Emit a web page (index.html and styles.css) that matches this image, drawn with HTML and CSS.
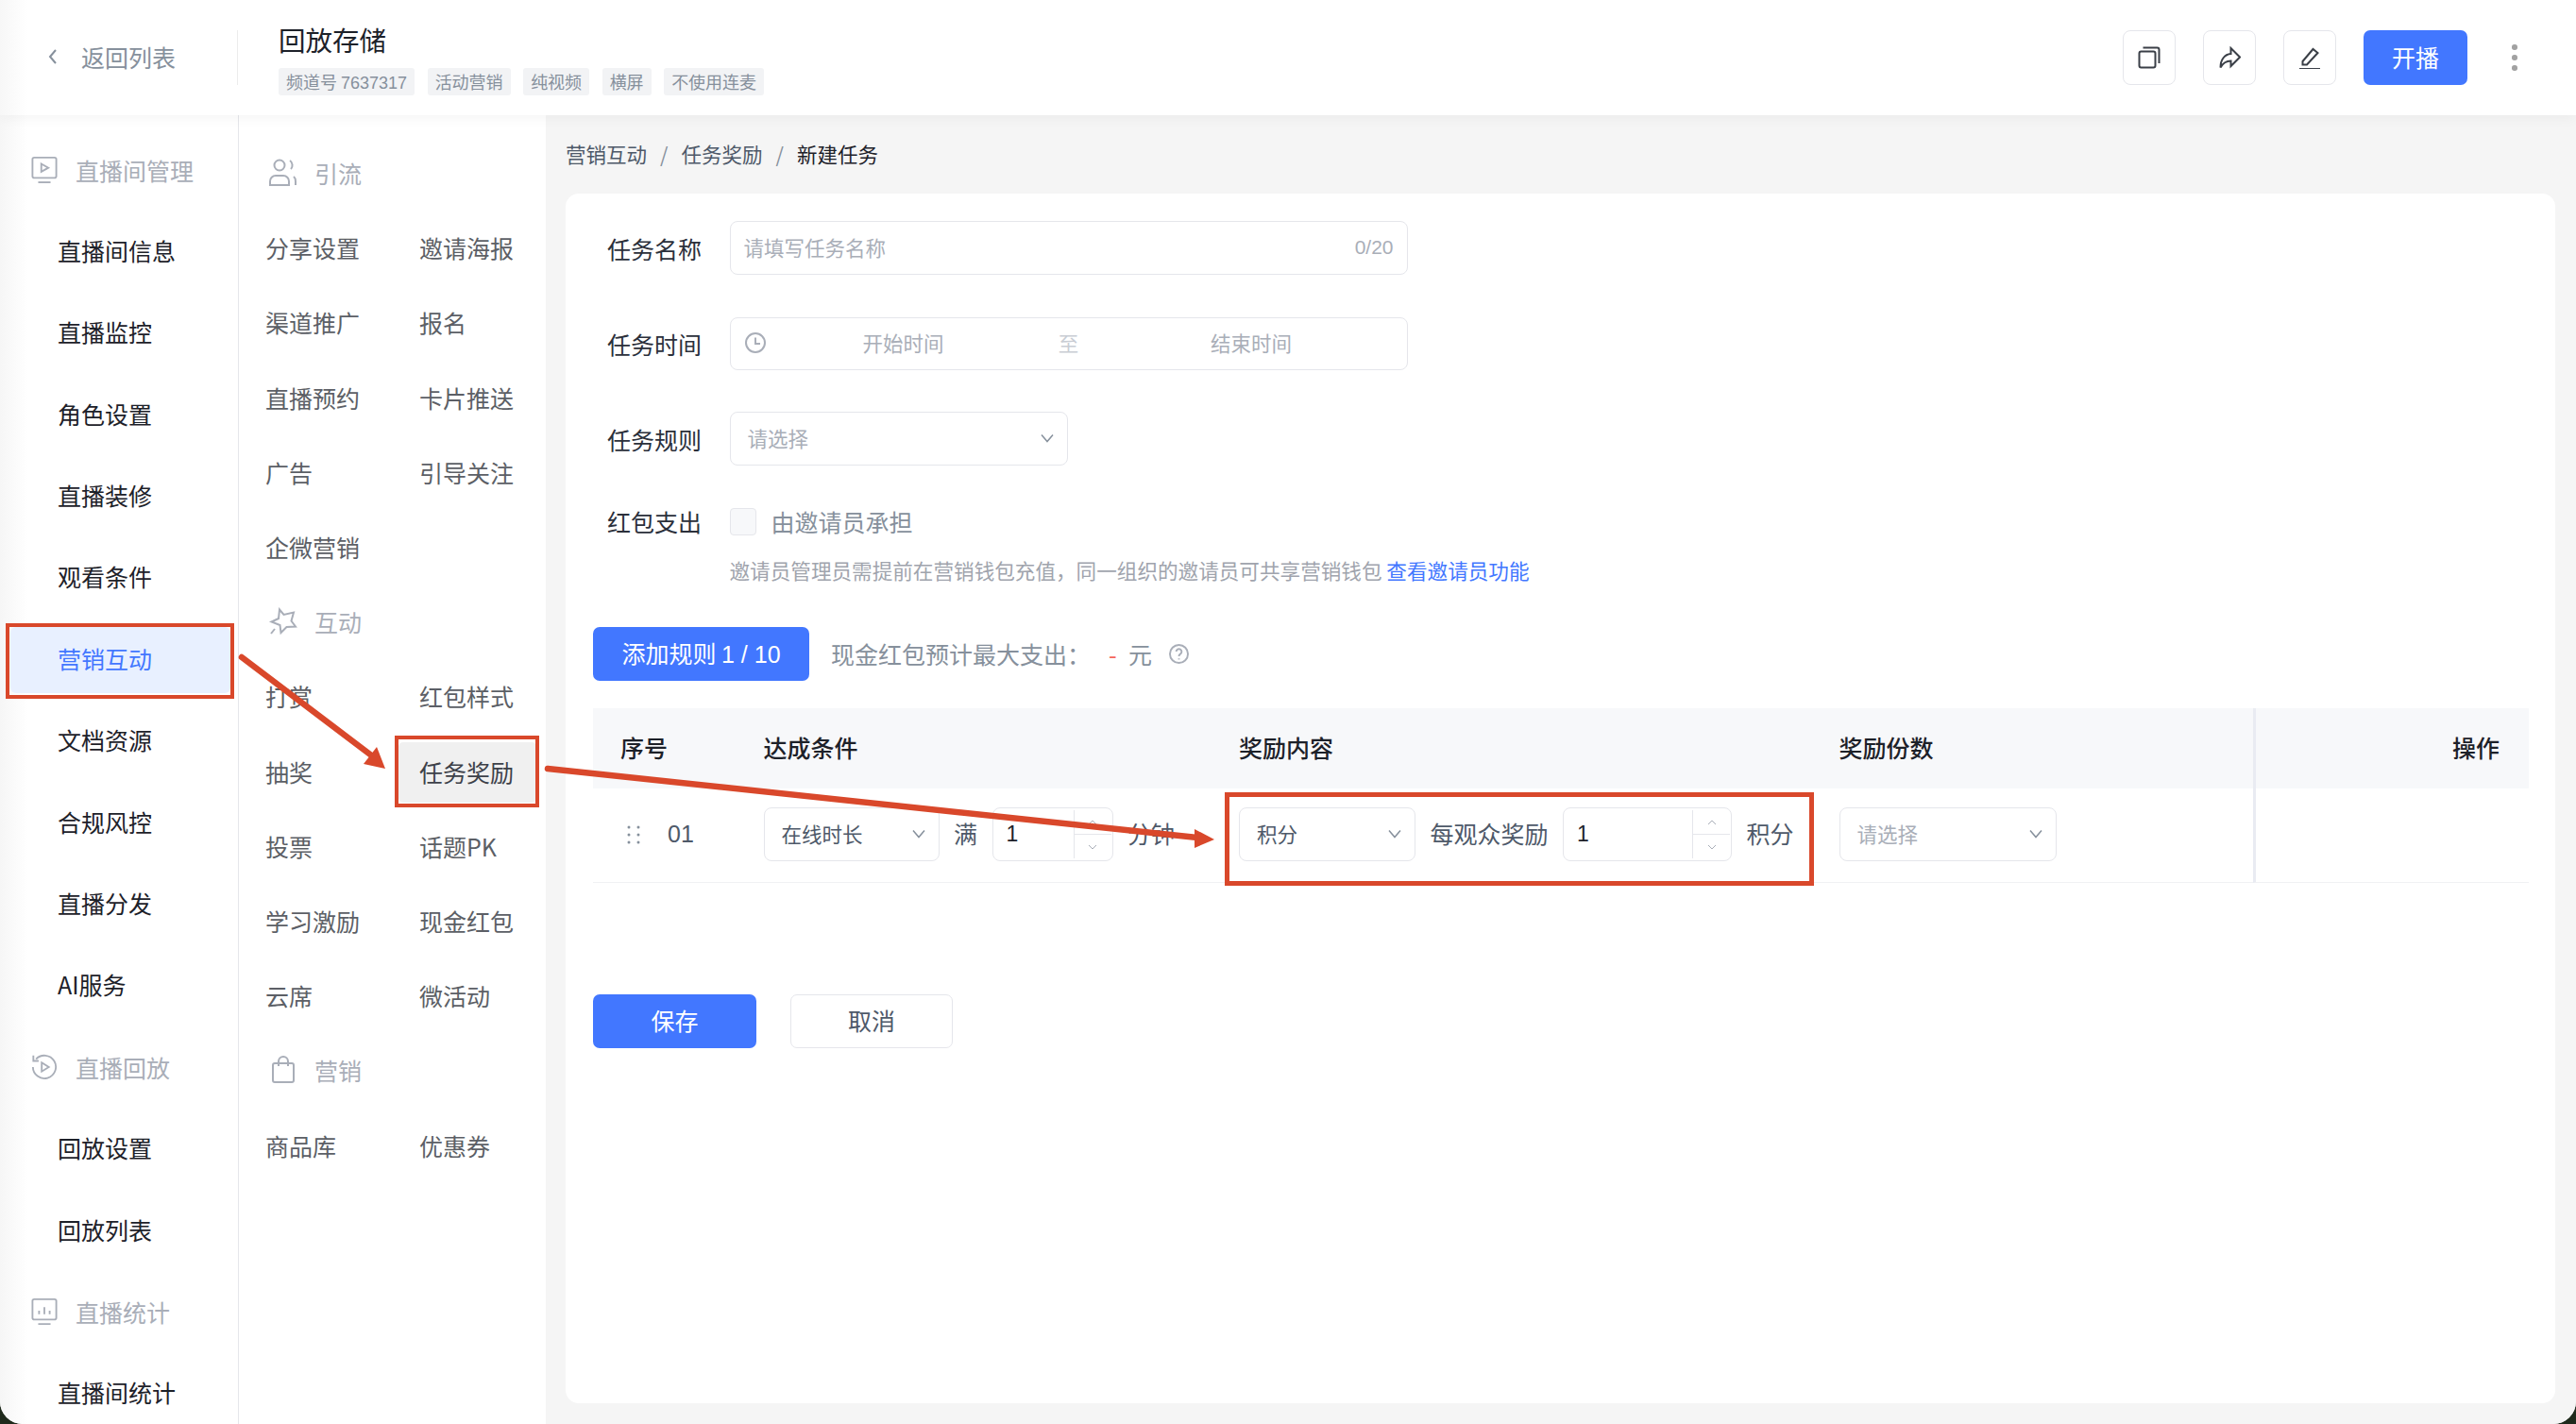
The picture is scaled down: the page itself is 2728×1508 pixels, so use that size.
FILE: index.html
```html
<!DOCTYPE html>
<html lang="zh-CN">
<head>
  <meta charset="UTF-8" />
  <title>回放存储 - 新建任务</title>
  <link rel="stylesheet" href="styles.css">
</head>
<body>
  <div class="app">
    <header class="topbar">
      <a class="back">
        <svg class="back-icon" viewBox="0 0 12 20"><path d="M9 3 3 10l6 7" /></svg>
        <span>返回列表</span>
      </a>
      <div class="channel">
        <h1>回放存储</h1>
        <div class="tags">
          <span class="tag">频道号 <span class="latin">7637317</span></span>
          <span class="tag">活动营销</span>
          <span class="tag">纯视频</span>
          <span class="tag">横屏</span>
          <span class="tag">不使用连麦</span>
        </div>
      </div>
      <div class="actions">
        <button class="icon-btn">
          <svg viewBox="0 0 24 24"><rect x="1.500" y="5.500" width="17" height="17" rx="2" /><path d="M5.500 1.500h15a2 2 0 0 1 2 2V18" /></svg>
        </button>
        <button class="icon-btn">
          <svg viewBox="0 0 24 24"><path d="M13.500 2 23 11.500 13.500 21v-5.500c-5 0-8 1.500-11 7C2.500 14 7 8.500 13.500 8z" /></svg>
        </button>
        <button class="icon-btn">
          <svg viewBox="0 0 24 24"><path d="m4.500 16 11-13 5 4L9 19.500H4.500z" /><path d="M1 24h22" /></svg>
        </button>
        <button class="btn-primary start-btn">开播</button>
        <div class="more"><i></i><i></i><i></i></div>
      </div>
    </header>

    <div class="content">
      <nav class="menu-main">
        <div class="menu-title">
          <svg viewBox="0 0 30 30"><rect x="1.500" y="1" width="27" height="23" rx="2" /><path d="m11.500 8 8 4.500-8 4.500z" /><path d="M8 29h14" /></svg>
          <span>直播间管理</span>
        </div>
        <a class="menu-item">直播间信息</a>
        <a class="menu-item">直播监控</a>
        <a class="menu-item">角色设置</a>
        <a class="menu-item">直播装修</a>
        <a class="menu-item">观看条件</a>
        <a class="menu-item active">营销互动</a>
        <a class="menu-item">文档资源</a>
        <a class="menu-item">合规风控</a>
        <a class="menu-item">直播分发</a>
        <a class="menu-item">AI服务</a>
        <div class="menu-title">
          <svg viewBox="0 0 30 30"><path d="M5.500 6A13 13 0 1 1 2 15" /><path d="M2.500 2v6h6" /><path d="m12 10 8 5-8 5z" /></svg>
          <span>直播回放</span>
        </div>
        <a class="menu-item">回放设置</a>
        <a class="menu-item">回放列表</a>
        <div class="menu-title">
          <svg viewBox="0 0 30 30"><rect x="1.500" y="1" width="27" height="23" rx="2" /><path d="M9 14v4M15 10v8M21 14v4" /><path d="M8 29h14" /></svg>
          <span>直播统计</span>
        </div>
        <a class="menu-item">直播间统计</a>
      </nav>

      <nav class="menu-sub">
        <div class="sub-title">
          <svg viewBox="0 0 32 30"><circle cx="12" cy="7" r="5.500" /><path d="M2 28v-4a6 6 0 0 1 6-6h8a6 6 0 0 1 6 6v4z" /><path d="M23 2a6 6 0 0 1 1 9" /><path d="M27 19a6 6 0 0 1 2 5v4" /></svg>
          <span>引流</span>
        </div>
        <div class="sub-grid">
          <a class="sub-item">分享设置</a><a class="sub-item">邀请海报</a>
          <a class="sub-item">渠道推广</a><a class="sub-item">报名</a>
          <a class="sub-item">直播预约</a><a class="sub-item">卡片推送</a>
          <a class="sub-item">广告</a><a class="sub-item">引导关注</a>
          <a class="sub-item">企微营销</a>
        </div>
        <div class="sub-title">
          <svg viewBox="0 0 32 30"><path d="M12 2.500 16.500 8 27 5.500l-2.500 9 4.500 6-9.500.5-6 6-1-8L3.500 15.500 11 12z" /><path d="m7 23-4 5" /></svg>
          <span>互动</span>
        </div>
        <div class="sub-grid">
          <a class="sub-item">打赏</a><a class="sub-item">红包样式</a>
          <a class="sub-item">抽奖</a><a class="sub-item current">任务奖励</a>
          <a class="sub-item">投票</a><a class="sub-item">话题PK</a>
          <a class="sub-item">学习激励</a><a class="sub-item">现金红包</a>
          <a class="sub-item">云席</a><a class="sub-item">微活动</a>
        </div>
        <div class="sub-title">
          <svg viewBox="0 0 32 30"><rect x="5" y="8" width="22" height="20" rx="2" /><path d="M11 11V6a5 5 0 0 1 10 0v5" /></svg>
          <span>营销</span>
        </div>
        <div class="sub-grid">
          <a class="sub-item">商品库</a><a class="sub-item">优惠券</a>
        </div>
      </nav>

      <main class="page">
        <div class="crumbs">
          <span>营销互动</span><em>/</em><span>任务奖励</span><em>/</em><span class="crumb-now">新建任务</span>
        </div>

        <section class="card">
          <div class="form-row">
            <label>任务名称</label>
            <div class="field field-wide">
              <span class="placeholder">请填写任务名称</span>
              <span class="placeholder count latin">0/20</span>
            </div>
          </div>
          <div class="form-row">
            <label>任务时间</label>
            <div class="field field-wide field-time">
              <svg class="clock" viewBox="0 0 22 22"><circle cx="11" cy="11" r="10" /><path d="M11 5.500V12h5" /></svg>
              <span class="placeholder time-start">开始时间</span>
              <span class="placeholder time-sep">至</span>
              <span class="placeholder time-end">结束时间</span>
            </div>
          </div>
          <div class="form-row">
            <label>任务规则</label>
            <div class="field select select-rule">
              <span class="placeholder">请选择</span>
              <svg class="chevron" viewBox="0 0 14 10"><path d="m1 1.500 6 7 6-7" /></svg>
            </div>
          </div>
          <div class="form-row form-check">
            <label>红包支出</label>
            <span class="checkbox"></span>
            <span class="check-text">由邀请员承担</span>
          </div>
          <p class="hint">邀请员管理员需提前在营销钱包充值，同一组织的邀请员可共享营销钱包 <a>查看邀请员功能</a></p>

          <div class="toolbar">
            <button class="btn-primary add-btn">添加规则 <span class="latin">1 / 10</span></button>
            <span class="budget">现金红包预计最大支出：</span>
            <span class="budget-val">-</span>
            <span class="budget-unit">元</span>
            <svg class="help" viewBox="0 0 22 22"><circle cx="11" cy="11" r="10" /><path d="M8 8.500a3 3 0 1 1 4.500 2.600c-1 .6-1.500 1.100-1.500 2.400" /><path d="M11 16v1.200" /></svg>
          </div>

          <div class="rules">
            <div class="th th-seq">序号</div>
            <div class="th">达成条件</div>
            <div class="th">奖励内容</div>
            <div class="th">奖励份数</div>
            <div class="th th-op">操作</div>

            <div class="td td-seq">
              <svg class="drag" viewBox="0 0 14 20"><g><circle cx="2" cy="2" r="1.500" /><circle cx="12" cy="2" r="1.500" /><circle cx="2" cy="10" r="1.500" /><circle cx="12" cy="10" r="1.500" /><circle cx="2" cy="18" r="1.500" /><circle cx="12" cy="18" r="1.500" /></g></svg>
              <span class="latin">01</span>
            </div>
            <div class="td">
              <div class="field select select-cond">
                <span class="value">在线时长</span>
                <svg class="chevron" viewBox="0 0 14 10"><path d="m1 1.500 6 7 6-7" /></svg>
              </div>
              <span class="unit">满</span>
              <div class="field number number-min">
                <span class="num latin">1</span>
                <div class="steps">
                  <span><svg viewBox="0 0 10 6"><path d="m1 5 4-4 4 4" /></svg></span>
                  <span><svg viewBox="0 0 10 6"><path d="m1 1 4 4 4-4" /></svg></span>
                </div>
              </div>
              <span class="unit">分钟</span>
            </div>
            <div class="td td-reward">
              <div class="field select select-reward">
                <span class="value">积分</span>
                <svg class="chevron" viewBox="0 0 14 10"><path d="m1 1.500 6 7 6-7" /></svg>
              </div>
              <span class="unit">每观众奖励</span>
              <div class="field number number-reward">
                <span class="num latin">1</span>
                <div class="steps">
                  <span><svg viewBox="0 0 10 6"><path d="m1 5 4-4 4 4" /></svg></span>
                  <span><svg viewBox="0 0 10 6"><path d="m1 1 4 4 4-4" /></svg></span>
                </div>
              </div>
              <span class="unit">积分</span>
            </div>
            <div class="td">
              <div class="field select select-share">
                <span class="placeholder">请选择</span>
                <svg class="chevron" viewBox="0 0 14 10"><path d="m1 1.500 6 7 6-7" /></svg>
              </div>
            </div>
            <div class="td td-op"></div>
          </div>

          <div class="form-btns">
            <button class="btn-primary save-btn">保存</button>
            <button class="cancel-btn">取消</button>
          </div>
        </section>
      </main>
    </div>

    <!-- red annotation arrows drawn over the page -->
    <svg class="arrows" viewBox="0 0 2728 1508">
      <path class="arrow-line" d="M256 696 396 802" />
      <path class="arrow-head" d="M408 814 385 809 399 791z" />
      <path class="arrow-line" d="M580 814 1268 887" />
      <path class="arrow-head" d="M1286 889 1265 878 1265 898z" />
    </svg>
  </div>
</body>
</html>
```

FILE: styles.css
```css
body {
  margin: 0;
  width: 2728px;
  height: 1508px;
  overflow: hidden;
  background: #1f2a1c;
  font-family: "Noto Sans CJK SC", sans-serif;
  font-size: 25px;
  color: #1d2129;
}

svg {
  display: block;
  fill: none;
  stroke: currentColor;
  stroke-width: 2;
}

button {
  font-family: inherit;
  cursor: pointer;
}

/* digits without the foot on the 1 */
.latin {
  font-family: "Liberation Sans", sans-serif;
}

.app {
  position: relative;
  display: flex;
  flex-direction: column;
  height: 1508px;
  overflow: hidden;
  border-radius: 0 0 24px 24px;
  background: #fff;
}

/* Top bar */
.topbar {
  position: relative;
  z-index: 2;
  flex: none;
  display: flex;
  align-items: center;
  height: 122px;
  background: linear-gradient(90deg, #f7f7f7, #fff 30px);
  box-shadow: 0 2px 14px rgba(0, 0, 0, 0.05);
}

.back {
  display: flex;
  align-items: center;
  box-sizing: border-box;
  width: 252px;
  height: 58px;
  padding: 0 0 2px 50px;
  border-right: 1px solid #ececec;
  color: #86909c;
}

.back-icon {
  width: 12px;
  height: 20px;
  margin-right: 24px;
  stroke: #86909c;
}

.channel {
  margin: 4px 0 0 43px;
}

.channel h1 {
  margin: -2px 0 12px;
  font-size: 28.500px;
  font-weight: 400;
  line-height: 36px;
}

.tags {
  display: flex;
  gap: 13.500px;
}

.tag {
  height: 29px;
  padding: 0 8px;
  border-radius: 3px;
  background: #f2f3f5;
  color: #86909c;
  font-size: 18px;
  line-height: 28px;
}

.actions {
  display: flex;
  align-items: center;
  gap: 29px;
  margin-left: auto;
  padding-right: 62.500px;
}

.icon-btn {
  width: 56px;
  height: 58px;
  padding: 0;
  border: 1.500px solid #e5e6eb;
  border-radius: 8px;
  background: #fff;
  color: #3a3f47;
}

.icon-btn svg {
  width: 24px;
  height: 24px;
  margin: auto;
}

.btn-primary {
  border: none;
  border-radius: 7px;
  background: #4277ff;
  color: #fff;
  font-size: 25px;
}

.start-btn {
  width: 110px;
  height: 58px;
  padding: 0 0 2px;
}

.more {
  display: flex;
  flex-direction: column;
  gap: 5.500px;
  margin-left: 18px;
}

.more i {
  width: 5.500px;
  height: 5.500px;
  border-radius: 50%;
  background: #a2a2a2;
}

/* Menus */
.content {
  flex: 1;
  display: flex;
  min-height: 0;
}

.menu-main {
  flex: none;
  display: flex;
  flex-direction: column;
  box-sizing: border-box;
  width: 253px;
  padding-top: 15.500px;
  border-right: 1px solid #e5e6eb;
  background: linear-gradient(90deg, #f6f6f6, #fff 30px);
}

.menu-title {
  flex: none;
  display: flex;
  align-items: center;
  gap: 19px;
  box-sizing: border-box;
  height: 86.400px;
  padding: 0 0 2px 33px;
  color: #a9aeb8;
}

.menu-title svg {
  flex: none;
  width: 28px;
  height: 30px;
}

.menu-item {
  flex: none;
  position: relative;
  display: block;
  height: 70.400px;
  margin: 8px 8px 8px 11px;
  padding-left: 50px;
  border-radius: 6px;
  line-height: 67px;
}

.menu-item.active {
  background: #e8f0ff;
  color: #4277ff;
}

.menu-item.active::after {
  content: "";
  position: absolute;
  inset: -4px -4px -6px -5px;
  border: 4.500px solid #d9482b;
}

.menu-sub {
  flex: none;
  box-sizing: border-box;
  width: 325px;
  padding-top: 22.500px;
}

.sub-title {
  display: flex;
  align-items: center;
  gap: 17px;
  box-sizing: border-box;
  height: 79.200px;
  padding: 0 0 2px 31px;
  color: #a9aeb8;
}

.sub-title svg {
  flex: none;
  width: 32px;
  height: 30px;
}

.sub-grid {
  display: grid;
  grid-template-columns: 163px 146px;
  grid-auto-rows: 64px;
  row-gap: 15.200px;
  padding: 7.600px 0 7.600px 6px;
}

.sub-item {
  position: relative;
  padding-left: 22px;
  border-radius: 5px;
  color: #5c5f66;
  line-height: 62px;
}

.sub-item.current {
  background: #f0f0f0;
  color: #3d4149;
}

.sub-item.current::after {
  content: "";
  position: absolute;
  inset: -7px -3px -5px -4px;
  border: 4px solid #d9482b;
}

/* Main page */
.page {
  flex: 1;
  min-width: 0;
  padding: 0 22px 22px 21px;
  background: #f5f5f5;
}

.crumbs {
  display: flex;
  align-items: center;
  box-sizing: border-box;
  height: 83px;
  padding-bottom: 2px;
  font-size: 21.500px;
  color: #4e5969;
}

.crumbs em {
  margin: 0 14px;
  font-style: normal;
  color: #86909c;
}

.crumb-now {
  color: #1d2129;
}

.card {
  box-sizing: border-box;
  height: 1281px;
  padding: 29px 28px 0 29px;
  border-radius: 14px;
  background: #fff;
}

.form-row {
  display: flex;
  align-items: center;
  margin-bottom: 44.500px;
  padding-left: 15px;
}

.form-row label {
  flex: none;
  width: 129.500px;
  color: #2b303b;
}

.field {
  display: flex;
  align-items: center;
  box-sizing: border-box;
  height: 57px;
  border: 1.500px solid #e5e6eb;
  border-radius: 8px;
  background: #fff;
  font-size: 21.500px;
}

.field-wide {
  justify-content: space-between;
  width: 718px;
  padding: 0 14px 2px;
}

.placeholder {
  color: #a9aeb8;
}

.count {
  font-size: 21px;
}

.field-time {
  justify-content: flex-start;
  height: 56px;
  padding: 0 0 2px 15px;
}

.clock {
  flex: none;
  width: 22px;
  height: 22px;
  color: #a9aeb8;
}

.time-start {
  width: 292px;
  text-align: center;
}

.time-sep {
  width: 58px;
  color: #c9cdd4;
  text-align: center;
}

.time-end {
  flex: 1;
  text-align: center;
}

.select {
  justify-content: space-between;
  padding: 0 14px 2px 18px;
}

.chevron {
  flex: none;
  width: 14px;
  height: 10px;
  color: #86909c;
  stroke-width: 1.500;
}

.select-rule {
  width: 358px;
}

.select-cond {
  width: 186px;
}

.select-reward {
  width: 187px;
}

.select-share {
  width: 230px;
}

.value {
  color: #4e5969;
}

.form-check {
  height: 29px;
  margin-bottom: 0;
}

.checkbox {
  box-sizing: border-box;
  width: 28px;
  height: 29px;
  margin-right: 16px;
  border: 1.500px solid #e5e6eb;
  border-radius: 4px;
  background: #f7f8fa;
}

.check-text {
  color: #86909c;
}

.hint {
  margin: 22px 0 0 144.500px;
  font-size: 21.600px;
  line-height: 30px;
  color: #a0a4ad;
}

.hint a {
  color: #4277ff;
}

.toolbar {
  display: flex;
  align-items: center;
  height: 57px;
  margin-top: 45px;
}

.add-btn {
  width: 229px;
  height: 57px;
  margin-right: 23px;
  padding: 0 0 2px;
}

.budget {
  width: 294px;
  color: #86909c;
}

.budget-val {
  width: 21px;
  color: #f5655a;
}

.budget-unit {
  width: 43px;
  color: #86909c;
}

.help {
  width: 21px;
  height: 21px;
  color: #a9aeb8;
}

/* Rules table */
.rules {
  display: grid;
  grid-template-columns: 180.500px 503.500px 635.500px 438px 292.500px;
  grid-template-rows: 85px 100px;
  margin-top: 29px;
}

.th {
  display: flex;
  align-items: center;
  padding-bottom: 2px;
  background: #f7f8fa;
  font-weight: 500;
}

.th-seq {
  padding-left: 29px;
}

.th-op {
  justify-content: flex-end;
  padding-right: 31px;
  border-left: 3px solid #e9ebf2;
}

.td {
  display: flex;
  align-items: center;
  gap: 15.500px;
  box-sizing: border-box;
  padding-bottom: 1px;
  border-bottom: 1px solid #f0f1f3;
}

.td-seq {
  gap: 29px;
  padding-left: 36px;
  color: #4e5969;
}

.td-op {
  border-left: 3px solid #e9ebf2;
}

.td-reward {
  position: relative;
}

.td-reward::after {
  content: "";
  position: absolute;
  inset: 4px 27px -4px -15px;
  border: 5px solid #d9482b;
}

.drag {
  width: 14px;
  height: 20px;
  fill: #86909c;
  stroke: none;
}

.unit {
  padding-bottom: 3px;
  color: #4e5969;
}

.number {
  position: relative;
  justify-content: space-between;
  padding-left: 14px;
  color: #1d2129;
}

.num {
  font-size: 23px;
}

.number-min {
  width: 128px;
}

.number-reward {
  width: 179px;
}

.steps {
  display: flex;
  flex-direction: column;
  align-self: stretch;
  width: 39px;
  margin: 2px 1px;
  border-left: 1px solid #e5e6eb;
}

.steps span {
  flex: 1;
  display: flex;
  align-items: center;
  justify-content: center;
  color: #a9aeb8;
}

.steps span + span {
  border-top: 1px solid #e5e6eb;
}

.steps svg {
  width: 10px;
  height: 6px;
  stroke-width: 1;
}

.form-btns {
  display: flex;
  gap: 36px;
  margin-top: 118px;
}

.save-btn {
  width: 173px;
  height: 57px;
  padding: 0 0 2px;
}

.cancel-btn {
  width: 172px;
  height: 57px;
  padding: 0 0 2px;
  border: 1.500px solid #e5e6eb;
  border-radius: 7px;
  background: #fff;
  color: #4e5969;
  font-size: 25px;
}

/* Annotation overlay */
.arrows {
  position: absolute;
  top: 0;
  left: 0;
  z-index: 3;
  width: 2728px;
  height: 1508px;
  pointer-events: none;
}

.arrow-line {
  stroke: #d9482b;
  stroke-width: 6.500;
  stroke-linecap: round;
}

.arrow-head {
  fill: #d9482b;
  stroke: none;
}
```
